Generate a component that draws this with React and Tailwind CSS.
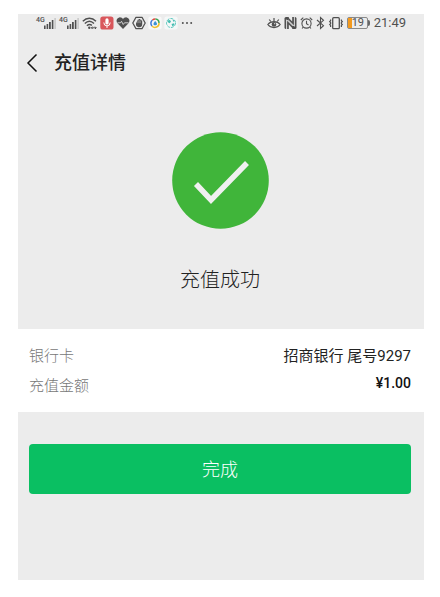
import React from 'react';

function Signal() {
    return (
        <span className="flex items-start">
            <span className="w-2 text-[7px] leading-[9px] font-medium">4G</span>
            <svg width="12" height="14" viewBox="0 0 12 14" fill="currentColor" aria-hidden="true">
                <rect x="0" y="9.500" width="1.600" height="3.500" />
                <rect x="2.600" y="8" width="1.600" height="5" />
                <rect x="5" y="6" width="1.800" height="7" />
                <rect x="7.800" y="4" width="1.600" height="9" />
                <rect x="10.400" y="2" width="1.400" height="11" fill="#c4c4c4" />
            </svg>
        </span>
    );
}

function WifiIcon() {
    return (
        <svg width="15" height="14" viewBox="0 0 15 14" fill="none" stroke="currentColor" strokeWidth="1.400" aria-hidden="true">
            <path d="M.8 5.200C4.700 1.200 10 1.200 14 5.200" />
            <path d="M2.800 7.600c2.800-2.800 6.400-2.800 9.200 0" />
            <path d="M4.900 9.800c1.600-1.500 3.400-1.600 5-.4" />
            <circle cx="7.300" cy="11.800" r="1.200" fill="currentColor" stroke="none" />
            <path d="M9.400 11.800h4.800M10.600 10.600l-1.200 1.200 1.200 1.200M13 10.600l1.200 1.200-1.200 1.200" strokeWidth="1" />
        </svg>
    );
}

function MicIcon() {
    return (
        <svg width="14" height="14" viewBox="0 0 14 14" aria-hidden="true">
            <rect x=".3" y=".5" width="13.200" height="13" rx="2.600" fill="#d9575c" />
            <rect x="5.400" y="2.300" width="3.200" height="6.200" rx="1.600" fill="#fff" />
            <path d="M3.800 6.500a3.200 3.400 0 0 0 6.400 0M7 10v2" fill="none" stroke="#fff" strokeWidth="1" />
        </svg>
    );
}

function HeartIcon() {
    return (
        <svg width="14" height="14" viewBox="0 0 14 14" aria-hidden="true">
            <path d="M7 13 1.700 7.600C-.3 5.400.3 1.900 3.400 1.400 5 1.200 6.300 2 7 3.200 7.700 2 9 1.200 10.600 1.400c3.100.5 3.700 4 1.700 6.200Z" fill="currentColor" />
            <path d="M1.500 6.800h3l1-1.500 1.700 3.200 1.300-1.700h4" fill="none" stroke="#ececec" strokeWidth=".8" />
        </svg>
    );
}

function HandIcon() {
    return (
        <svg width="14" height="14" viewBox="0 0 14 14" aria-hidden="true">
            <path d="M4 1.300h6L13.200 7 10 12.700H4L.8 7Z" fill="none" stroke="currentColor" strokeWidth="1.300" strokeLinejoin="round" />
            <path d="M4 5.300v4c.8 1.500 1.800 2 3.300 2 1.900 0 2.900-1.200 2.900-3V4.600H9.300V3.700H8.200V3H7v.6H5.800v.9H5v3Z" fill="currentColor" />
            <path d="M5.900 4.500v2.700M7.100 4v3M8.300 4.500v2.700" stroke="#ececec" strokeWidth=".4" />
        </svg>
    );
}

function ColorRingIcon() {
    return (
        <svg width="14" height="14" viewBox="0 0 14 14" fill="none" aria-hidden="true">
            <rect x=".3" y=".5" width="13.400" height="13" rx="2.500" fill="#f8f8f8" />
            <path d="M4 10A4 4 0 0 1 4.500 4" stroke="#3c78d8" strokeWidth="1.500" />
            <path d="M4.500 4A4 4 0 0 1 7.500 3" stroke="#e0483e" strokeWidth="1.500" />
            <path d="M7.500 3A4 4 0 0 1 11 7" stroke="#3aa757" strokeWidth="1.500" />
            <path d="M11 7A4 4 0 0 1 4 10" stroke="#f2c02e" strokeWidth="1.500" />
            <path d="M7.200 5q2.600 2.800 1.500 3.800-1.500 1-3 0Q4.800 7.800 7.200 5Z" fill="#3d92d6" />
        </svg>
    );
}

function GlobeIcon() {
    return (
        <svg width="14" height="14" viewBox="0 0 14 14" fill="none" aria-hidden="true">
            <rect x=".3" y=".5" width="13.400" height="13" rx="2.500" fill="#f5f8f8" />
            <circle cx="7" cy="7" r="4.500" stroke="#5cc8bd" strokeWidth="1" strokeDasharray="3 1" />
            <path d="M3.500 4.500 6 4l1 1.800-1.500 1.400L3.500 6ZM8.500 3.500l2 1-1 1.500ZM7.500 8l2.500-.8.500 1.500-2 1.800Z" fill="#46bdb2" />
        </svg>
    );
}

function MoreIcon() {
    return (
        <svg width="12" height="14" viewBox="0 0 12 14" fill="currentColor" aria-hidden="true">
            <circle cx="1.800" cy="7" r="1" />
            <circle cx="6" cy="7" r="1" />
            <circle cx="10.200" cy="7" r="1" />
        </svg>
    );
}

function EyeIcon() {
    return (
        <svg width="14" height="14" viewBox="0 0 14 14" fill="none" stroke="currentColor" strokeWidth="1.200" aria-hidden="true">
            <path d="M.8 8.500C3.800 4.600 10.200 4.600 13.200 8.500 10.200 12.600 3.800 12.600.8 8.500Z" />
            <circle cx="7" cy="8.400" r="2.300" fill="currentColor" stroke="none" />
            <circle cx="7.700" cy="7.700" r=".6" fill="#ececec" stroke="none" />
            <path d="M7 2v3M2.200 3.500l1.600 2M11.800 3.500l-1.600 2" />
        </svg>
    );
}

function NfcIcon() {
    return (
        <svg width="13" height="14" viewBox="0 0 13 14" aria-hidden="true">
            <rect x=".5" y="1" width="12" height="12" rx="1.500" fill="currentColor" />
            <path d="M2.600 13V3.800l6.200 6.200M10.400 1v9.200L4.200 4" fill="none" stroke="#ececec" strokeWidth=".9" />
            <path d="M4.800 13V8.500l3.400 3.400V13ZM8.200 1v4.500L4.800 2.100V1Z" fill="#ececec" />
        </svg>
    );
}

function AlarmIcon() {
    return (
        <svg width="13" height="14" viewBox="0 0 13 14" fill="none" stroke="currentColor" strokeWidth="1.100" aria-hidden="true">
            <circle cx="6.500" cy="7.500" r="4.600" />
            <path d="M6.500 4.700v3l2 1.300M.8 4 3.300 1.700M12.200 4 9.700 1.700M3.300 11l-1.200 1.500M9.700 11l1.200 1.500" />
        </svg>
    );
}

function BluetoothIcon() {
    return (
        <svg width="9" height="14" viewBox="0 0 9 14" fill="none" stroke="currentColor" strokeWidth="1.100" aria-hidden="true">
            <path d="M1 4 7.500 9.700 4.500 12.500V1.500L7.500 4.300 1 10" />
        </svg>
    );
}

function VibrateIcon() {
    return (
        <svg width="16" height="14" viewBox="0 0 16 14" fill="none" stroke="currentColor" aria-hidden="true">
            <rect x="4.700" y="1.700" width="6.600" height="11" rx="1" strokeWidth="1.300" />
            <path d="M2.600 3.500v1.300l-.9.800.9.900v1.200l-.9.800.9.900v1.600M13.400 3.500v1.300l.9.800-.9.900v1.200l.9.800-.9.900v1.600" strokeWidth="1.200" />
        </svg>
    );
}

function Battery({ level }) {
    return (
        <span className="flex items-center">
            <span className="flex h-3 w-[21px] items-center rounded-xs border border-[#8a8a8a]">
                <span className="h-2.5 w-1 shrink-0 bg-[#f39a1f]" />
                <span className="text-[11px] leading-3">{level}</span>
            </span>
            <span className="h-1.5 w-0.5 rounded-r-xs bg-[#666]" />
        </span>
    );
}

function StatusBar() {
    return (
        <div className="flex h-[18px] items-center justify-between px-[18px] text-[#505050]">
            <div className="flex items-center gap-[3px]">
                <Signal />
                <Signal />
                <WifiIcon />
                <div className="flex items-center gap-0.5">
                    <MicIcon />
                    <HeartIcon />
                    <HandIcon />
                    <ColorRingIcon />
                    <GlobeIcon />
                </div>
                <MoreIcon />
            </div>
            <div className="flex items-center gap-[3px]">
                <EyeIcon />
                <NfcIcon />
                <AlarmIcon />
                <BluetoothIcon />
                <VibrateIcon />
                <Battery level={19} />
                <time className="pl-px text-[13px] leading-[18px]">21:49</time>
            </div>
        </div>
    );
}

function Header() {
    return (
        <header className="flex h-[62px] items-center gap-4 pl-2">
            <button type="button" aria-label="返回" className="text-[#111]">
                <svg width="12" height="20" viewBox="0 0 12 20" fill="none" stroke="currentColor" strokeWidth="1.500">
                    <path d="M10.500 1.500 2 10l8.500 8.500" />
                </svg>
            </button>
            <h1 className="text-lg font-medium text-[#222]">充值详情</h1>
        </header>
    );
}

function Result() {
    return (
        <section className="flex flex-col items-center pt-[38px] pr-[13px] pb-[34px] pl-[11px]">
            <svg width="97" height="97" viewBox="0 0 97 97" fill="none" aria-hidden="true">
                <circle cx="48.500" cy="48.500" r="48.300" fill="#40b53a" />
                <path d="M24 52 39 68 75 31" stroke="#f0f0f0" strokeWidth="5.500" />
            </svg>
            <h2 className="mt-9 text-[20px] leading-[30px] font-light text-[#222]">充值成功</h2>
        </section>
    );
}

function Details() {
    return (
        <dl className="flex flex-col gap-2 bg-white pt-4 pr-[13px] pb-[15px] pl-[11px] text-[15px] leading-[22px]">
            <div className="flex justify-between">
                <dt className="font-light text-[#777]">银行卡</dt>
                <dd className="text-[#222]">招商银行 尾号9297</dd>
            </div>
            <div className="flex justify-between">
                <dt className="font-light text-[#777]">充值金额</dt>
                <dd className="text-[14px] leading-4 font-medium text-[#111]">¥1.00</dd>
            </div>
        </dl>
    );
}

export default function App() {
    return (
        <div className="min-h-screen bg-white pt-3.5 pr-4 pb-[17px] pl-[18px] font-[Roboto,'Noto_Sans_CJK_SC',sans-serif]">
            <main className="bg-[#ececec] pb-[86px]">
                <StatusBar />
                <Header />
                <Result />
                <Details />
                <div className="pt-8 pr-[13px] pl-[11px]">
                    <button type="button" className="h-[50px] w-full rounded bg-[#0abf62] text-[18px] font-light text-white">
                        完成
                    </button>
                </div>
            </main>
        </div>
    );
}
